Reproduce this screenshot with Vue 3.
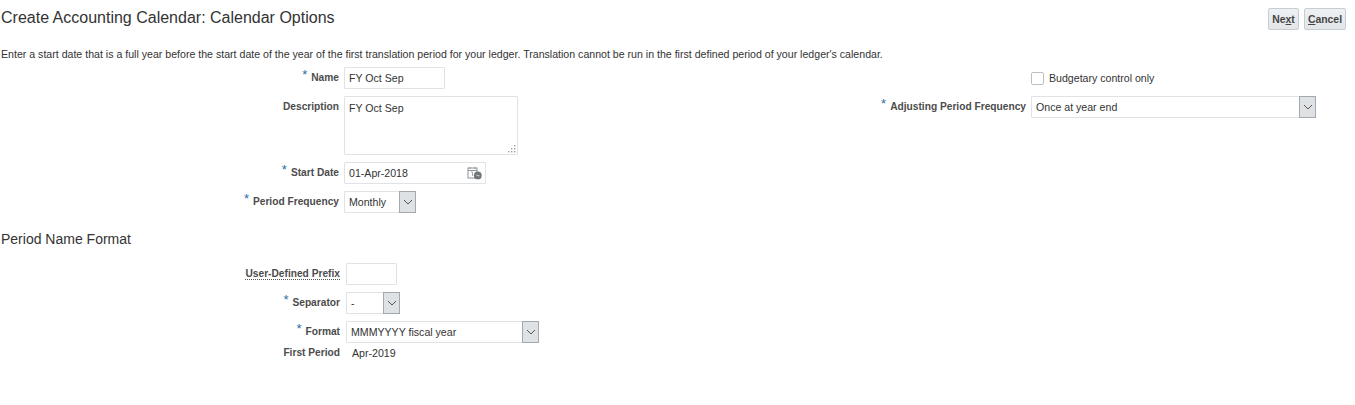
<template>
  <div class="page">
    <div class="page-header">
      <h1>Create Accounting Calendar: Calendar Options</h1>
      <div class="actions">
        <button class="btn btn-next">Ne<u>x</u>t</button>
        <button class="btn btn-cancel"><u>C</u>ancel</button>
      </div>
    </div>

    <p class="hint">Enter a start date that is a full year before the start date of the year of the first translation period for your ledger. Translation cannot be run in the first defined period of your ledger's calendar.</p>

    <div class="options">
      <div class="form-grid">
        <label class="req">Name</label>
        <input v-model="form.name" class="input input-name" type="text" />

        <label class="top-label">Description</label>
        <div class="area-wrap">
          <textarea v-model="form.description" class="input input-desc"></textarea>
          <svg class="grip" width="9" height="9" viewBox="0 0 9 9" fill="#9aa0a4">
            <rect x="7" y="1" width="1.4" height="1.4" />
            <rect x="7" y="4" width="1.4" height="1.4" />
            <rect x="4" y="4" width="1.4" height="1.4" />
            <rect x="7" y="7" width="1.4" height="1.4" />
            <rect x="4" y="7" width="1.4" height="1.4" />
            <rect x="1" y="7" width="1.4" height="1.4" />
          </svg>
        </div>

        <label class="req">Start Date</label>
        <div class="input date-field">
          <input v-model="form.startDate" type="text" />
          <svg width="16" height="14" viewBox="0 0 16 14">
            <rect x="1" y="2" width="9" height="10" fill="#fff" stroke="#8d9397" />
            <path d="M1 4.5h9M3 1v2M8 1v2" stroke="#8d9397" fill="none" />
            <path d="M4 6h1.5v4" stroke="#a3a8ab" fill="none" />
            <circle cx="10.8" cy="9.4" r="3.9" fill="#6f7578" />
            <path d="M9.3 8.8l1.6 1h1.6" stroke="#d5d8da" fill="none" />
          </svg>
        </div>

        <label class="req">Period Frequency</label>
        <div class="select select-freq">
          <span>Monthly</span>
          <b class="arrow"><svg width="10" height="6" viewBox="0 0 10 6"><path d="M1 1l4 4 4-4" fill="none" stroke="#555" /></svg></b>
        </div>
      </div>

      <div class="side-grid">
        <span></span>
        <label class="check-line">
          <i class="checkbox"></i>
          <span>Budgetary control only</span>
        </label>

        <label class="req">Adjusting Period Frequency</label>
        <div class="select select-adjust">
          <span>Once at year end</span>
          <b class="arrow"><svg width="10" height="6" viewBox="0 0 10 6"><path d="M1 1l4 4 4-4" fill="none" stroke="#555" /></svg></b>
        </div>
      </div>
    </div>

    <h2>Period Name Format</h2>

    <div class="form-grid format-grid">
      <label><span class="dotted">User-Defined Prefix</span></label>
      <input v-model="form.prefix" class="input input-prefix" type="text" />

      <label class="req">Separator</label>
      <div class="select select-sep">
        <span>-</span>
        <b class="arrow"><svg width="10" height="6" viewBox="0 0 10 6"><path d="M1 1l4 4 4-4" fill="none" stroke="#555" /></svg></b>
      </div>

      <label class="req">Format</label>
      <div class="select select-format">
        <span>MMMYYYY fiscal year</span>
        <b class="arrow"><svg width="10" height="6" viewBox="0 0 10 6"><path d="M1 1l4 4 4-4" fill="none" stroke="#555" /></svg></b>
      </div>

      <label class="last-row">First Period</label>
      <span class="readonly last-row">Apr-2019</span>
    </div>
  </div>
</template>

<script setup>
import { reactive } from 'vue'

const form = reactive({
  name: 'FY Oct Sep',
  description: 'FY Oct Sep',
  startDate: '01-Apr-2018',
  prefix: ''
})
</script>

<style>
html, body {
  background: #fff;
}
</style>

<style scoped>
.page {
  width: 1355px;
  height: 405px;
  overflow: hidden;
  font-family: "Liberation Sans", Arial, sans-serif;
  font-size: 10.6px;
  color: #333;
  background: #fff;
}

.page-header {
  display: flex;
  justify-content: space-between;
  align-items: center;
  height: 22px;
  padding: 8px 9px 0 1px;
}

h1 {
  margin: -2px 0 0;
  font-size: 16px;
  font-weight: normal;
  color: #333;
}

.actions {
  display: flex;
  gap: 5px;
}

.btn {
  height: 22px;
  padding: 0;
  border: 1px solid #c6ced4;
  border-radius: 2px;
  background: linear-gradient(#eef1f3, #e2e6e9);
  font-family: inherit;
  font-size: 10.4px;
  font-weight: bold;
  color: #444;
}

.btn-next {
  width: 31px;
}

.btn-cancel {
  width: 42px;
}

.hint {
  margin: 18px 0 0 1px;
  height: 12px;
  line-height: 12px;
  font-size: 10.6px;
  color: #333;
  white-space: nowrap;
}

.options {
  display: flex;
  align-items: flex-start;
  margin-top: 7px;
}

.form-grid {
  display: grid;
  grid-template-columns: 339px auto;
  column-gap: 5px;
  row-gap: 7px;
  align-items: center;
  justify-items: start;
  width: 600px;
  flex: none;
}

.side-grid {
  display: grid;
  grid-template-columns: 426px auto;
  column-gap: 5px;
  row-gap: 7px;
  align-items: center;
  justify-items: start;
}

label {
  justify-self: end;
  margin-bottom: 1px;
  line-height: 12px;
  font-size: 10.2px;
  font-weight: bold;
  color: #4c4c4c;
  white-space: nowrap;
}

.req::before {
  content: "*";
  margin-right: 4px;
  position: relative;
  top: -2px;
  line-height: 0;
  font-size: 13px;
  font-weight: normal;
  color: #2f6da3;
}

.top-label {
  align-self: start;
  margin-top: 5px;
}

.input,
.select {
  box-sizing: border-box;
  height: 22px;
  border: 1px solid #dfe3e6;
  border-radius: 1px;
  background: #fff;
  font-family: inherit;
  font-size: 10.6px;
  color: #333;
}

input.input,
textarea.input {
  padding: 0 4px;
  outline: none;
}

.input-name {
  width: 101px;
}

.area-wrap {
  position: relative;
  display: flex;
}

textarea.input-desc {
  display: block;
  width: 174px;
  height: 59px;
  padding-top: 5px;
  resize: none;
}

.grip {
  position: absolute;
  right: 2px;
  bottom: 2px;
}

.date-field {
  display: flex;
  align-items: center;
  justify-content: space-between;
  width: 142px;
  padding: 0 2px 0 4px;
}

.date-field input {
  width: 100px;
  border: 0;
  padding: 0;
  outline: none;
  font: inherit;
  color: inherit;
}

.select {
  display: flex;
  align-items: center;
  justify-content: space-between;
  padding-left: 4px;
}

.arrow {
  box-sizing: border-box;
  display: flex;
  align-items: center;
  justify-content: center;
  width: 17px;
  height: 22px;
  margin: -1px -1px -1px 0;
  border: 1px solid #a4a9ad;
  background: #dfe2e4;
}

.select-freq {
  width: 72px;
}

.select-adjust {
  width: 285px;
}

.select-sep {
  width: 54px;
}

.select-format {
  width: 193px;
}

.check-line {
  display: flex;
  align-items: center;
  gap: 5px;
  justify-self: start;
  height: 22px;
  margin-bottom: 0;
  font-size: 10.6px;
  font-weight: normal;
  color: #333;
}

.checkbox {
  box-sizing: border-box;
  width: 13px;
  height: 13px;
  border: 1px solid #b9bfc4;
  border-radius: 2px;
  background: #fff;
}

h2 {
  margin: 18px 0 0 1px;
  height: 16px;
  line-height: 16px;
  font-size: 14px;
  font-weight: normal;
  color: #333;
}

.format-grid {
  grid-template-columns: 340px auto;
  column-gap: 6px;
  margin-top: 16px;
}

.input-prefix {
  width: 51px;
}

.dotted {
  border-bottom: 1px dotted #555;
}

.last-row {
  margin-top: -3px;
  margin-bottom: 0;
  line-height: 12px;
}

.readonly {
  margin-left: 6px;
  color: #333;
}
</style>
